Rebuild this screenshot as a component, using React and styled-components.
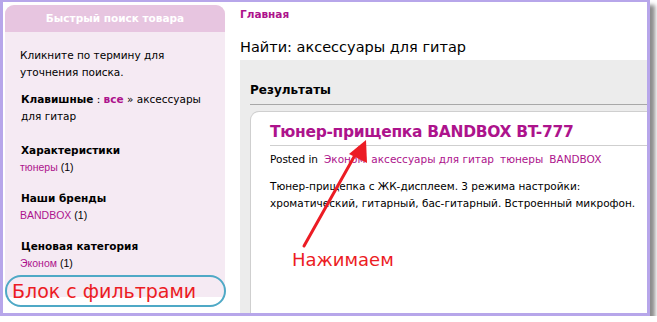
import React from "react";
import styled, { createGlobalStyle } from "styled-components";

const Global = createGlobalStyle`
  html, body { margin: 0; padding: 0; background: #fff; }
  body { font-family: "DejaVu Sans", Verdana, sans-serif; }
`;

const MAGENTA = "#ad138c";

const Frame = styled.div`
  width: 642px;
  height: 308px;
  border: 3px solid #b7a6ea;
  border-top-width: 2px;
  background: #fff;
  box-shadow: 5px 5px 4px rgba(0, 0, 0, 0.45);
  display: flex;
  gap: 15px;
  padding: 3px 0 0 2px;
  box-sizing: content-box;
  overflow: hidden;
  position: relative;
`;

const SideColumn = styled.aside`
  width: 220px;
  display: flex;
  flex-direction: column;
  flex-shrink: 0;
`;

const SideBox = styled.div`
  background: #f5eaf3;
  border-radius: 9px 9px 0 0;
  height: 292px;
  display: flex;
  flex-direction: column;
`;

const SideHeader = styled.div`
  height: 27px;
  background: #e7c5e0;
  border-radius: 9px 9px 0 0;
  color: #fff;
  font: bold 10.5px/27px "DejaVu Sans", sans-serif;
  text-align: center;
`;

const SideBody = styled.div`
  padding: 15px 10px 0 15px;
`;

const Hint = styled.p`
  margin: 0 0 10px;
  font: 10.5px/17px "DejaVu Sans", sans-serif;
  color: #000;
`;

const Crumbs = styled.p`
  margin: 0 0 16px 1px;
  font: 10.5px/17px "DejaVu Sans", sans-serif;
  color: #000;
`;

const Strong = styled.b`
  font-weight: bold;
  color: ${({ $accent }) => ($accent ? MAGENTA : "#000")};
`;

const Group = styled.div`
  margin-bottom: 13px;
`;

const GroupTitle = styled.h4`
  margin: 0 0 0 1px;
  font: bold 10.5px/18px "DejaVu Sans", sans-serif;
  color: #000;
`;

const TermLine = styled.div`
  font: 10.5px/17px "Liberation Sans", Arial, sans-serif;
  color: #000;
`;

const TermLink = styled.a`
  color: ${MAGENTA};
  text-decoration: none;
`;

const Callout = styled.div`
  margin-top: -22px;
  height: 28px;
  border: 2.5px solid #4fa9c6;
  border-radius: 16px;
  color: #ec1c24;
  font: 19px/28px "DejaVu Sans", sans-serif;
  padding-left: 5px;
  position: relative;
  margin-right: -1px;
`;

const Main = styled.main`
  flex: 1;
  display: flex;
  flex-direction: column;
  min-width: 0;
`;

const Home = styled.a`
  color: ${MAGENTA};
  font: bold 10.5px/18px "DejaVu Sans", sans-serif;
  text-decoration: none;
`;

const PageTitle = styled.h1`
  margin: 14px 0 0;
  font: 14.5px/20px "DejaVu Sans", sans-serif;
  color: #000;
`;

const Panel = styled.section`
  flex: 1;
  margin-top: 3px;
  background: #ececec;
  padding: 20px 0 0 10px;
  display: flex;
  flex-direction: column;
`;

const PanelTitle = styled.h2`
  margin: 0;
  font: bold 12px/21px "DejaVu Sans", sans-serif;
  color: #000;
  padding-bottom: 3px;
  border-bottom: 1px solid #a8a8a8;
`;

const Card = styled.article`
  flex: 1;
  margin-top: 6px;
  background: #fff;
  border-top: 1px solid #cfcfcf;
  border-left: 1px solid #cfcfcf;
  border-top-left-radius: 9px;
  padding: 9px 0 0 19px;
`;

const ProductTitle = styled.h3`
  margin: 0;
  font: bold 15.5px/22px "DejaVu Sans", sans-serif;
  letter-spacing: -0.3px;
  color: ${MAGENTA};
  padding-bottom: 2px;
  border-bottom: 1px solid #cfcfcf;
`;

const Meta = styled.div`
  margin-top: 5px;
  font: 10.5px/17px "DejaVu Sans", sans-serif;
  color: #000;
  display: flex;
  gap: 6px;
`;

const MetaLink = styled.a`
  color: ${MAGENTA};
  text-decoration: none;
`;

const Description = styled.p`
  margin: 10px 0 0;
  font: 10.5px/17px "DejaVu Sans", sans-serif;
  color: #000;
`;

const Arrow = styled.svg`
  position: absolute;
  left: 290px;
  top: 130px;
  overflow: visible;
`;

const Note = styled.div`
  position: absolute;
  left: 289px;
  top: 245px;
  color: #ec1c24;
  font: 18px/26px "DejaVu Sans", sans-serif;
`;

const groups = [
  { title: "Характеристики", term: "тюнеры", count: 1 },
  { title: "Наши бренды", term: "BANDBOX", count: 1 },
  { title: "Ценовая категория", term: "Эконом", count: 1 },
];

const tags = ["Эконом", "аксессуары для гитар", "тюнеры", "BANDBOX"];

export default function App() {
  return (
    <>
      <Global />
      <Frame>
        <SideColumn>
          <SideBox>
            <SideHeader>Быстрый поиск товара</SideHeader>
            <SideBody>
              <Hint>
                Кликните по термину для
                <br />
                уточнения поиска.
              </Hint>
              <Crumbs>
                <Strong>Клавишные</Strong> : <Strong $accent>все</Strong> »
                аксессуары для гитар
              </Crumbs>
              {groups.map((g) => (
                <Group key={g.title}>
                  <GroupTitle>{g.title}</GroupTitle>
                  <TermLine>
                    <TermLink>{g.term}</TermLink> ({g.count})
                  </TermLine>
                </Group>
              ))}
            </SideBody>
          </SideBox>
          <Callout>Блок с фильтрами</Callout>
        </SideColumn>
        <Main>
          <Home>Главная</Home>
          <PageTitle>Найти: аксессуары для гитар</PageTitle>
          <Panel>
            <PanelTitle>Результаты</PanelTitle>
            <Card>
              <ProductTitle>Тюнер-прищепка BANDBOX BT-777</ProductTitle>
              <Meta>
                <span>Posted in</span>
                {tags.map((t) => (
                  <MetaLink key={t}>{t}</MetaLink>
                ))}
              </Meta>
              <Description>
                Тюнер-прищепка с ЖК-дисплеем. 3 режима настройки:
                <br />
                хроматический, гитарный, бас-гитарный. Встроенный микрофон.
              </Description>
            </Card>
          </Panel>
        </Main>
        <Arrow width="80" height="120" viewBox="0 0 80 120">
          <line x1="11" y1="114" x2="66" y2="16" stroke="#ec1c24" strokeWidth="3" strokeLinecap="round" />
          <polygon points="73,8 74,31 56,22" fill="#ec1c24" />
        </Arrow>
        <Note>Нажимаем</Note>
      </Frame>
    </>
  );
}
